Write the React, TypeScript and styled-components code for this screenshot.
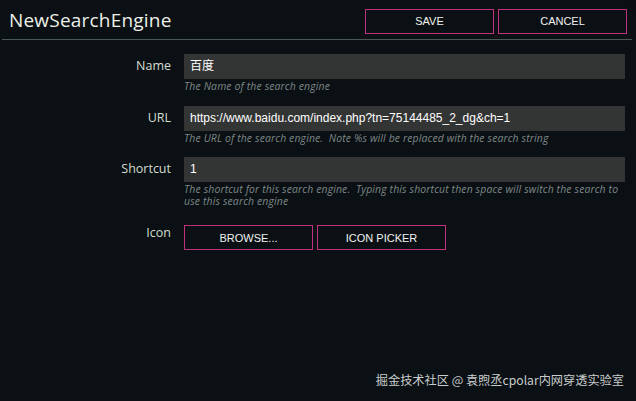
import styled, { createGlobalStyle } from 'styled-components';

const Global = createGlobalStyle`
    html, body {
        margin: 0;
        padding: 0;
        background: #0a1013;
    }
    #root {
        width: 636px;
        height: 401px;
    }
`

const Page = styled.div`
    width: 636px;
    height: 401px;
    background: #0a1013;
    display: flex;
    flex-direction: column;
    font-family: "Open Sans", "Liberation Sans", sans-serif;
    box-sizing: border-box;
    border-top-right-radius: 10px;
    overflow: hidden;
`

const Header = styled.div`
    display: flex;
    align-items: center;
    justify-content: space-between;
    height: 40px;
    margin: 0 4px 0 2px;
    padding: 0 5px 0 7px;
    border-bottom: 1px solid #4a5858;
    box-sizing: border-box;
`

const Title = styled.h1`
    margin: 0;
    font-size: 19px;
    font-weight: 400;
    color: #eef0e8;
    letter-spacing: 0.2px;
`

const Actions = styled.div`
    display: flex;
    gap: 4px;
    padding-top: 3px;
`

const OutlineButton = styled.button`
    width: 129px;
    height: 25px;
    background: transparent;
    border: 1px solid #c0307c;
    color: #f2f2f2;
    font-family: "Liberation Sans", Arial, sans-serif;
    font-size: 11px;
    padding: 0;
    cursor: pointer;
`

const Form = styled.div`
    display: grid;
    grid-template-columns: 171px 1fr;
    column-gap: 13px;
    row-gap: 13px;
    padding: 14px 11px 0 0;
`

const Label = styled.label<{ $top?: number }>`
    text-align: right;
    font-size: 12.5px;
    color: #d4ddd2;
    padding-top: ${p => p.$top ?? 3}px;
`

const Field = styled.div`
    display: flex;
    flex-direction: column;
`

const Input = styled.div`
    height: 25px;
    background: #333535;
    color: #ffffff;
    font-family: "Liberation Sans", Arial, "Noto Sans CJK SC", sans-serif;
    font-size: 12px;
    line-height: 25px;
    padding: 0 6px;
    white-space: nowrap;
    overflow: hidden;
`

const Hint = styled.div`
    margin-top: 2px;
    font-size: 10.4px;
    font-style: italic;
    letter-spacing: 0.15px;
    line-height: 11.5px;
    color: #7f8888;
`

const ButtonRow = styled.div`
    display: flex;
    gap: 4px;
    padding-top: 5px;
`

const Footer = styled.div`
    margin-top: auto;
    padding: 0 12px 12px 0;
    text-align: right;
    font-family: "Noto Sans CJK SC", "Noto Sans", sans-serif;
    font-size: 12.2px;
    color: #c9cdcd;
`

export default function App() {
    return (
        <Page>
            <Global />
            <Header>
                <Title>NewSearchEngine</Title>
                <Actions>
                    <OutlineButton>SAVE</OutlineButton>
                    <OutlineButton>CANCEL</OutlineButton>
                </Actions>
            </Header>
            <Form>
                <Label>Name</Label>
                <Field>
                    <Input>百度</Input>
                    <Hint>The Name of the search engine</Hint>
                </Field>

                <Label>URL</Label>
                <Field>
                    <Input>https://www.baidu.com/index.php?tn=75144485_2_dg&amp;ch=1</Input>
                    <Hint>The URL of the search engine.&nbsp; Note %s will be replaced with the search string</Hint>
                </Field>

                <Label>Shortcut</Label>
                <Field>
                    <Input>1</Input>
                    <Hint>The shortcut for this search engine.&nbsp; Typing this shortcut then space will switch the search to use this search engine</Hint>
                </Field>

                <Label $top={4}>Icon</Label>
                <ButtonRow>
                    <OutlineButton>BROWSE...</OutlineButton>
                    <OutlineButton>ICON PICKER</OutlineButton>
                </ButtonRow>
            </Form>
            <Footer>掘金技术社区 @ 袁煦丞cpolar内网穿透实验室</Footer>
        </Page>
    )
}
